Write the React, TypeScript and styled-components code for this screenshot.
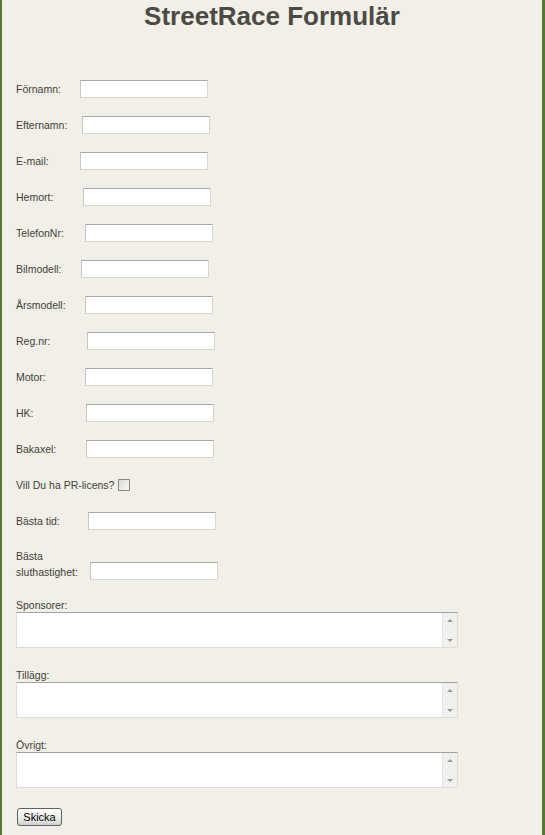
import styled, { createGlobalStyle } from 'styled-components';

const GlobalStyle = createGlobalStyle`
  html, body {
    margin: 0;
    padding: 0;
    background: #f1efe7;
  }
  * {
    box-sizing: border-box;
  }
`;

type Field = { label: string; offset: number };

const fields: Field[] = [
  { label: 'Förnamn:', offset: 64 },
  { label: 'Efternamn:', offset: 66 },
  { label: 'E-mail:', offset: 64 },
  { label: 'Hemort:', offset: 67 },
  { label: 'TelefonNr:', offset: 69 },
  { label: 'Bilmodell:', offset: 65 },
  { label: 'Årsmodell:', offset: 69 },
  { label: 'Reg.nr:', offset: 71 },
  { label: 'Motor:', offset: 69 },
  { label: 'HK:', offset: 70 },
  { label: 'Bakaxel:', offset: 70 },
];

const areas = ['Sponsorer:', 'Tillägg:', 'Övrigt:'];

const App = () => {
  return (
    <Page>
      <GlobalStyle />
      <Title>StreetRace Formulär</Title>
      <Form onSubmit={(e) => e.preventDefault()}>
        {fields.map(({ label, offset }) => (
          <Row key={label}>
            <Label $width={offset}>{label}</Label>
            <TextInput type="text" />
          </Row>
        ))}
        <Row>
          <InlineLabel>Vill Du ha PR-licens?</InlineLabel>
          <CheckBox />
        </Row>
        <Row>
          <Label $width={72}>Bästa tid:</Label>
          <TextInput type="text" />
        </Row>
        <TallRow>
          <Label $width={74}>
            Bästa
            <br />
            sluthastighet:
          </Label>
          <TextInput type="text" />
        </TallRow>
        <Areas>
          {areas.map((name) => (
            <AreaBlock key={name}>
              <AreaLabel>{name}</AreaLabel>
              <AreaBox>
                <TextArea />
                <ScrollBar>
                  <Arrow $up />
                  <Arrow />
                </ScrollBar>
              </AreaBox>
            </AreaBlock>
          ))}
        </Areas>
        <SubmitButton type="submit">Skicka</SubmitButton>
      </Form>
    </Page>
  );
};

export default App;

const Page = styled.div`
  width: 545px;
  min-height: 835px;
  background: #f1efe7;
  border-left: 2px solid #557a34;
  border-right: 3px solid #557a34;
  font-family: 'Liberation Sans', Arial, sans-serif;
  color: #3f3f3a;
`;

const Title = styled.h1`
  margin: 0;
  padding-top: 1px;
  text-align: center;
  font-size: 26px;
  line-height: 30px;
  font-weight: bold;
  color: #4a4b45;
`;

const Form = styled.form`
  padding: 40px 0 0 14px;
  display: flex;
  flex-direction: column;
`;

const Row = styled.div`
  height: 36px;
  display: flex;
  align-items: center;
`;

const TallRow = styled.div`
  padding-top: 9px;
  display: flex;
  align-items: flex-end;
`;

const Label = styled.label<{ $width: number }>`
  width: ${(p) => p.$width}px;
  flex-shrink: 0;
  font-size: 10.5px;
  line-height: 16px;
  color: #3f3f3a;
`;

const InlineLabel = styled.label`
  white-space: nowrap;
  margin-right: 4px;
  font-size: 10.5px;
  line-height: 16px;
  color: #3f3f3a;
`;

const TextInput = styled.input`
  width: 128px;
  height: 18px;
  margin: 0;
  padding: 1px 3px;
  background: #fff;
  border: 1px solid #d6d6d0;
  border-top-color: #a9a9a4;
  border-left-color: #c6c6c0;
  font-size: 11px;
  outline: none;
`;

const CheckBox = styled.span`
  width: 12px;
  height: 12px;
  border: 1px solid #8a8a85;
  background: linear-gradient(135deg, #dcdcd6, #f8f8f6);
`;

const Areas = styled.div`
  padding-top: 18px;
  display: flex;
  flex-direction: column;
  gap: 20px;
`;

const AreaBlock = styled.div`
  display: flex;
  flex-direction: column;
`;

const AreaLabel = styled.span`
  font-size: 10.5px;
  line-height: 14px;
`;

const AreaBox = styled.div`
  width: 442px;
  height: 36px;
  display: flex;
  background: #fff;
  border: 1px solid #dedcd6;
  border-top-color: #a3a39e;
`;

const TextArea = styled.textarea`
  flex: 1;
  margin: 0;
  padding: 2px;
  border: none;
  resize: none;
  outline: none;
  background: #fff;
  font-family: 'Liberation Sans', Arial, sans-serif;
  font-size: 11px;
`;

const ScrollBar = styled.div`
  width: 15px;
  display: flex;
  flex-direction: column;
  justify-content: space-between;
  align-items: center;
  padding: 6px 0 5px;
  background: #f0f0ee;
  border-left: 1px solid #e4e4e0;
`;

const Arrow = styled.span<{ $up?: boolean }>`
  width: 0;
  height: 0;
  border-left: 3px solid transparent;
  border-right: 3px solid transparent;
  ${(p) =>
    p.$up ? 'border-bottom: 3px solid #9a9c94;' : 'border-top: 3px solid #9a9c94;'}
`;

const SubmitButton = styled.button`
  align-self: flex-start;
  margin: 20px 0 0 1px;
  width: 45px;
  height: 18px;
  padding: 0;
  font-family: 'Liberation Sans', Arial, sans-serif;
  font-size: 11px;
  color: #000;
  border: 1px solid #5f6063;
  border-radius: 3px;
  background: linear-gradient(#ffffff, #e6e6e2 70%, #cfcfcb);
`;
